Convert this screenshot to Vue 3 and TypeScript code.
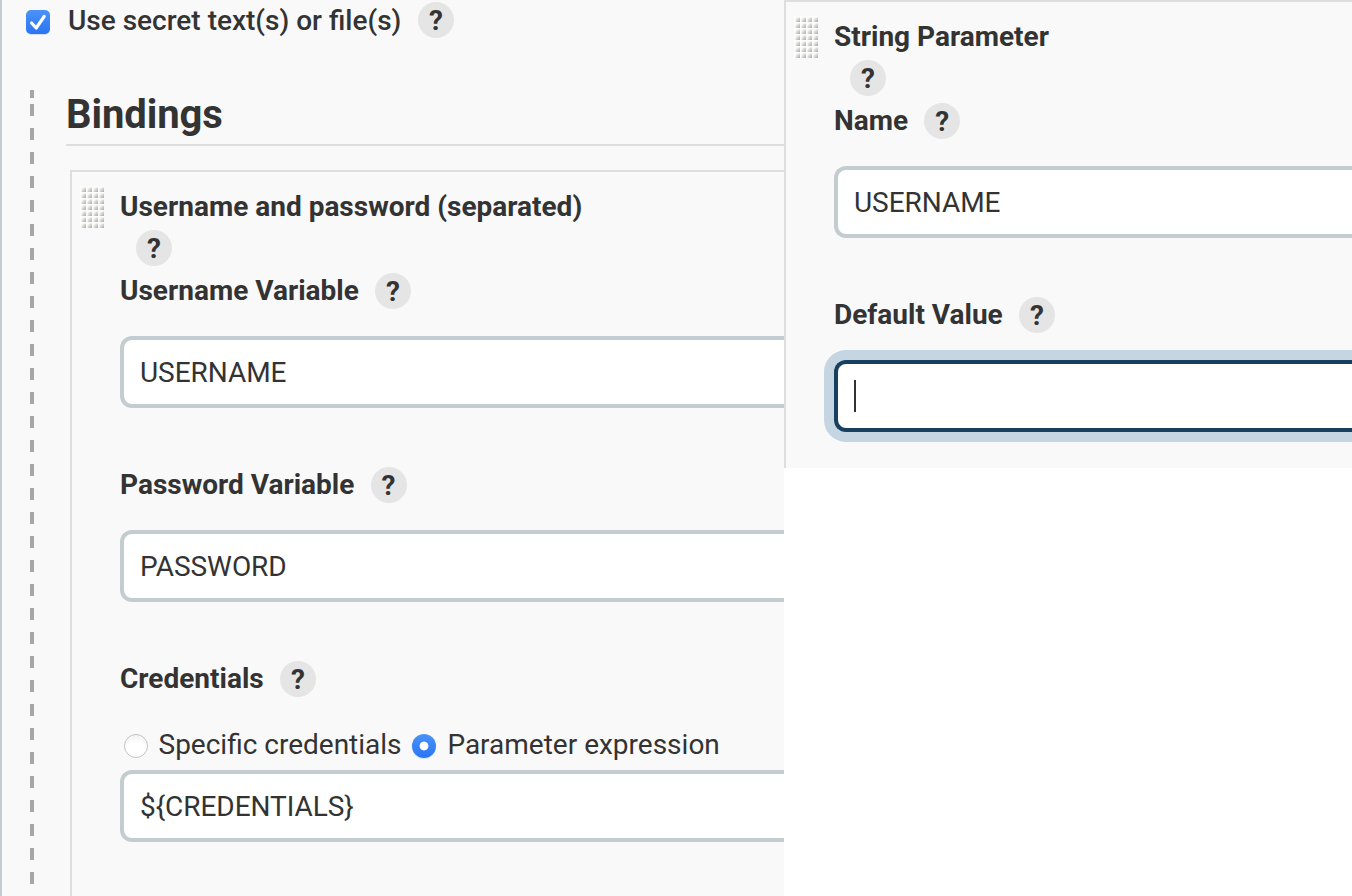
<script setup lang="ts">
interface Field {
  label: string
  value: string
  focused?: boolean
  options?: { label: string; checked: boolean }[]
}

interface Panel {
  key: string
  title: string
  fields: Field[]
}

const bindings: Panel = {
  key: 'bindings',
  title: 'Username and password (separated)',
  fields: [
    { label: 'Username Variable', value: 'USERNAME' },
    { label: 'Password Variable', value: 'PASSWORD' },
    {
      label: 'Credentials',
      value: '${CREDENTIALS}',
      options: [
        { label: 'Specific credentials', checked: false },
        { label: 'Parameter expression', checked: true },
      ],
    },
  ],
}

const parameter: Panel = {
  key: 'parameter',
  title: 'String Parameter',
  fields: [
    { label: 'Name', value: 'USERNAME' },
    { label: 'Default Value', value: '', focused: true },
  ],
}

const columns: Panel[] = [bindings, parameter]
</script>

<template>
  <main class="page">
    <section v-for="panel in columns" :key="panel.key" class="column" :class="panel.key">
      <template v-if="panel.key === 'bindings'">
        <div class="toggle">
          <svg class="checkbox" width="28" height="28" viewBox="0 0 28 28">
            <defs>
              <linearGradient id="blue" x1="0" y1="0" x2="0" y2="1">
                <stop offset="0" stop-color="#4b93f8" />
                <stop offset="1" stop-color="#2a74f5" />
              </linearGradient>
            </defs>
            <rect x="2" y="2.8" width="24" height="24" rx="5" fill="#2a74f5" opacity=".25" />
            <rect x="2" y="2" width="24" height="24" rx="5" fill="url(#blue)" />
            <path d="M7.6 15 L12.2 20 L20.2 8.4" fill="none" stroke="#fff" stroke-width="3.2" stroke-linecap="round" stroke-linejoin="round" />
          </svg>
          <span class="toggle-text">Use secret text(s) or file(s)</span>
          <span class="help">?</span>
        </div>
        <h2 class="heading">Bindings</h2>
        <div class="rail"></div>
      </template>

      <div class="card">
        <svg class="grip" width="24" height="42" viewBox="0 0 24 42">
          <defs>
            <linearGradient id="bump" x1="0" y1="0" x2="1" y2="1">
              <stop offset=".1" stop-color="#fafaf9" />
              <stop offset=".55" stop-color="#d2d2d0" />
              <stop offset="1" stop-color="#a8a8a6" />
            </linearGradient>
          </defs>
          <rect width="24" height="42" fill="#fdfdfc" />
          <template v-for="r in 7" :key="r">
            <rect
              v-for="c in 4"
              :key="c"
              :x="c * 6 - 4.5"
              :y="r * 6 - 4.5"
              width="4.5"
              height="4.5"
              fill="url(#bump)"
            />
          </template>
        </svg>
        <div class="body">
          <h3 class="title">{{ panel.title }}</h3>
          <div class="title-help"><span class="help">?</span></div>
          <div v-for="field in panel.fields" :key="field.label" class="field">
            <div class="label-row" :class="{ spaced: field.options }">
              <span class="label">{{ field.label }}</span>
              <span class="help">?</span>
            </div>
            <div v-if="field.options" class="options">
              <span v-for="option in field.options" :key="option.label" class="option">
                <span class="radio" :class="{ checked: option.checked }"></span>
                <span class="option-text">{{ option.label }}</span>
              </span>
            </div>
            <div class="input" :class="{ focused: field.focused }">
              <span v-if="field.focused" class="caret"></span>
              <span v-else class="value">{{ field.value }}</span>
            </div>
          </div>
        </div>
      </div>
    </section>
  </main>
</template>

<style>
html,
body {
  background: #fff;
  overflow: hidden;
}
</style>

<style scoped>
.page {
  display: flex;
  align-items: flex-start;
  width: 1352px;
  height: 896px;
  overflow: hidden;
  color: #333;
  font-family: Roboto, 'Liberation Sans', sans-serif;
  font-size: 28px;
  line-height: 36px;
  white-space: nowrap;
}
.column {
  position: relative;
  box-sizing: border-box;
  overflow: hidden;
  background: #f9f9f9;
}
.bindings {
  width: 784px;
  height: 896px;
  border-left: 2px solid #c3cccf;
}
.parameter {
  width: 568px;
  height: 468px;
}
.toggle {
  display: flex;
  height: 40px;
  padding-left: 22px;
}
.checkbox {
  display: block;
  margin-top: 8px;
}
.toggle-text {
  width: 333px;
  margin: 3px 17px 0 16px;
  font-weight: 500;
}
.help {
  flex: none;
  width: 36px;
  height: 36px;
  border-radius: 50%;
  background: #e5e5e5;
  font-weight: 700;
  line-height: 37px;
  text-align: center;
}
.toggle .help {
  margin-top: 2px;
}
.heading {
  box-sizing: border-box;
  height: 56px;
  margin: 50px 0 24px 64px;
  border-bottom: 2px solid #dedede;
  font-size: 40px;
  font-weight: 700;
  letter-spacing: -0.1px;
  line-height: 50px;
}
.rail {
  position: absolute;
  top: 90px;
  left: 28px;
  width: 4px;
  height: 794px;
  background:
    linear-gradient(#a6a6a6, #a6a6a6) 0 0 / 4px 8px no-repeat,
    repeating-linear-gradient(transparent 0 14px, #a6a6a6 14px 26px) 0 0 / 4px 26px no-repeat,
    repeating-linear-gradient(transparent 0 12px, #a6a6a6 12px 24px) 0 26px / 4px 768px no-repeat;
}
.card {
  display: flex;
  box-sizing: border-box;
  height: 760px;
  padding: 14px 0 0 8px;
  border: solid #dedede;
  border-width: 2px 0 0 2px;
}
.bindings .card {
  margin-left: 68px;
}
.grip {
  display: block;
  flex: none;
  margin-right: 16px;
}
.body {
  flex: 1;
  min-width: 0;
}
.title {
  height: 44px;
  margin: 0;
  font-size: 28px;
  font-weight: 700;
  line-height: 41px;
}
.title-help {
  display: flex;
  height: 43px;
  padding-left: 16px;
}
.field {
  margin-bottom: 59px;
}
.label-row {
  display: flex;
  gap: 16.2px;
  height: 36px;
  margin-bottom: 27px;
}
.label-row.spaced {
  margin-bottom: 33px;
}
.label {
  font-weight: 700;
  line-height: 35px;
}
.options {
  display: flex;
  gap: 10.5px;
  height: 40px;
  padding-left: 4px;
}
.option {
  display: flex;
  gap: 10.5px;
}
.option-text {
  flex: none;
  margin-top: -3px;
}
.radio {
  flex: none;
  box-sizing: border-box;
  width: 24px;
  height: 24px;
  margin-top: 4px;
  border: 1px solid #c4c4c4;
  border-radius: 50%;
  background: linear-gradient(#f3f3f3, #fff 40%);
}
.radio.checked {
  margin-right: 0.8px;
  border: 0;
  background:
    radial-gradient(circle, #fff 4px, transparent 4.8px),
    linear-gradient(#4b93f8, #2a74f5);
  box-shadow: 0 1px 1px rgba(42, 116, 245, 0.2);
}
.input {
  display: flex;
  align-items: center;
  box-sizing: border-box;
  height: 72px;
  padding-left: 16px;
  border: solid #c3cccf;
  border-width: 4px 0 4px 4px;
  border-radius: 12px 0 0 12px;
  background: #fff;
}
.input.focused {
  border-color: #173f5f;
  box-shadow: 0 0 0 10px #c5d5e2;
}
.value {
  padding-top: 2px;
  letter-spacing: -0.05px;
}
.caret {
  width: 2px;
  height: 32px;
  background: #333;
}
</style>
